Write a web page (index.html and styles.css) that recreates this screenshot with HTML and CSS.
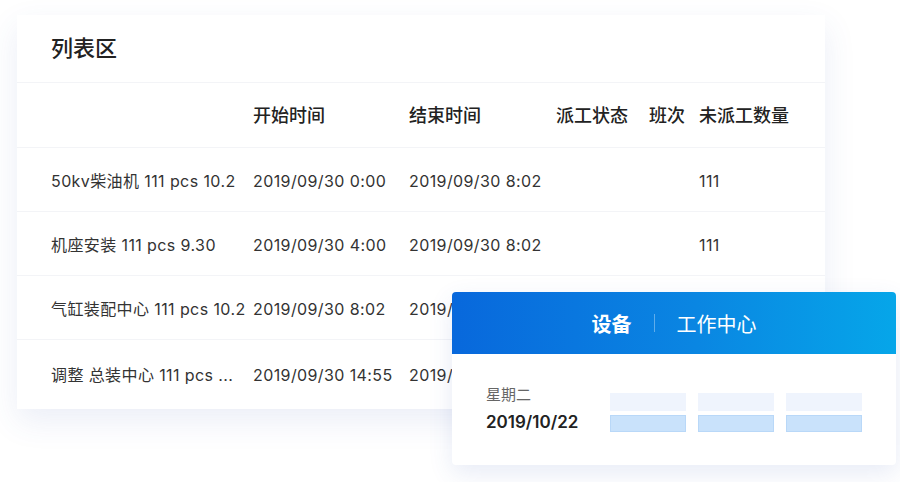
FILE: index.html
```html
<!DOCTYPE html>
<html lang="zh-CN">
  <head>
    <meta charset="UTF-8" />
    <meta name="viewport" content="width=device-width, initial-scale=1.0" />
    <title>列表区</title>
    <link rel="stylesheet" href="styles.css">
  </head>
  <body>
    <div class="stage">
      <div class="list-card">
        <h1 class="list-title">列表区</h1>
        <div class="row head">
          <span></span>
          <span>开始时间</span>
          <span>结束时间</span>
          <span>派工状态</span>
          <span>班次</span>
          <span>未派工数量</span>
        </div>
        <div class="row">
          <span>50kv柴油机 111 pcs 10.2</span>
          <span>2019/09/30 0:00</span>
          <span>2019/09/30 8:02</span>
          <span></span>
          <span></span>
          <span>111</span>
        </div>
        <div class="row">
          <span>机座安装 111 pcs 9.30</span>
          <span>2019/09/30 4:00</span>
          <span>2019/09/30 8:02</span>
          <span></span>
          <span></span>
          <span>111</span>
        </div>
        <div class="row">
          <span>气缸装配中心 111 pcs 10.2</span>
          <span>2019/09/30 8:02</span>
          <span>2019/09/30 8:02</span>
          <span></span>
          <span></span>
          <span></span>
        </div>
        <div class="row last">
          <span>调整 总装中心 111 pcs ...</span>
          <span>2019/09/30 14:55</span>
          <span>2019/09/30 8:02</span>
          <span></span>
          <span></span>
          <span></span>
        </div>
      </div>

      <div class="popup">
        <div class="popup-head">
          <span class="tab active">设备</span>
          <span class="sep"></span>
          <span class="tab">工作中心</span>
        </div>
        <div class="popup-body">
          <div class="day">
            <div class="weekday">星期二</div>
            <div class="date">2019/10/22</div>
          </div>
          <div class="slots">
            <div class="slot"><i class="top"></i><i class="bar"></i></div>
            <div class="slot"><i class="top"></i><i class="bar"></i></div>
            <div class="slot"><i class="top"></i><i class="bar"></i></div>
          </div>
        </div>
      </div>
    </div>
  </body>
</html>
```

FILE: styles.css
```css
* {
  margin: 0;
  padding: 0;
  box-sizing: border-box;
}
body {
  font-family: Inter, "Noto Sans CJK SC", sans-serif;
  background-color: #fff;
  color: #333;
  width: 900px;
  height: 482px;
  overflow: hidden;
}

.stage {
  position: relative;
  width: 900px;
  height: 482px;
  padding: 15px 0 0 17px;
}

.list-card {
  width: 808px;
  height: 394px;
  background-color: #fff;
  box-shadow: 0 12px 30px rgba(60, 90, 180, 0.1);
}

.list-title {
  height: 68px;
  line-height: 66px;
  padding-left: 34px;
  font-size: 22px;
  font-weight: 500;
  color: #222;
  border-bottom: 1px solid #f3f4f7;
}

.row {
  display: grid;
  grid-template-columns: 202px 156px 147px 93px 50px 1fr;
  align-items: center;
  height: 64px;
  padding: 3px 0 0 34px;
  font-size: 16px;
  line-height: 20px;
  letter-spacing: 0.4px;
  color: #333;
  border-bottom: 1px solid #f3f4f7;
  white-space: nowrap;
}

.row.head {
  height: 65px;
  padding-top: 2px;
  font-size: 18px;
  letter-spacing: 0;
  font-weight: 500;
  color: #222;
}

.row.last {
  border-bottom: none;
  padding-top: 6px;
}

.popup {
  position: absolute;
  left: 452px;
  top: 292px;
  width: 444px;
  height: 173px;
  background-color: #fff;
  border-radius: 4px;
  box-shadow: 0 8px 24px rgba(60, 90, 180, 0.12);
  overflow: hidden;
}

.popup-head {
  height: 62px;
  display: flex;
  align-items: center;
  justify-content: center;
  gap: 22px;
  background: linear-gradient(90deg, #0868dc 0%, #0a86e2 55%, #06a6e9 100%);
  color: #fff;
  font-size: 20px;
}

.tab.active {
  font-weight: 700;
}

.sep {
  width: 1px;
  height: 18px;
  background-color: rgba(255, 255, 255, 0.35);
}

.popup-body {
  display: flex;
  align-items: center;
  padding: 31px 34px 0 34px;
}

.day {
  width: 124px;
}

.weekday {
  font-size: 15px;
  color: #666;
  line-height: 20px;
}

.date {
  font-size: 17px;
  font-weight: 600;
  color: #222;
  line-height: 34px;
}

.slots {
  display: flex;
  gap: 12px;
}

.slot {
  width: 76px;
  display: flex;
  flex-direction: column;
  gap: 4px;
}

.slot i {
  display: block;
}

.slot .top {
  height: 18px;
  background-color: #eff4fd;
}

.slot .bar {
  height: 17px;
  background-color: #c9e2fb;
  border: 1px solid #b9d8f8;
}
```
